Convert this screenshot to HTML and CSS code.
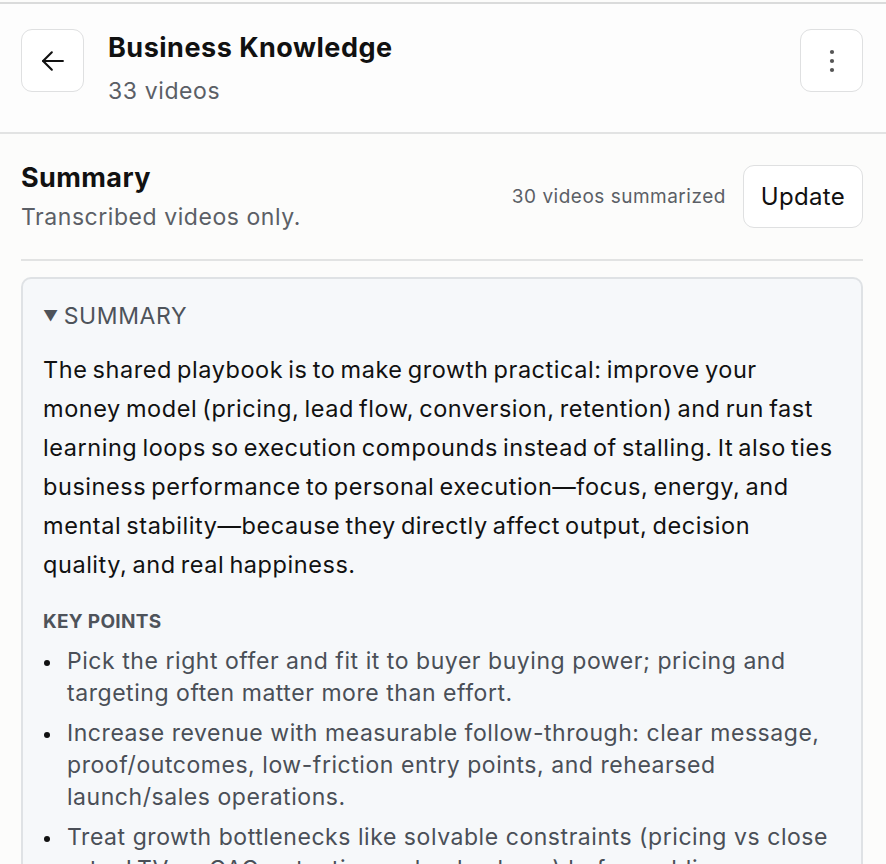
FILE: index.html
```html
<!DOCTYPE html>
<html lang="en">
<head>
    <meta charset="UTF-8">
    <meta name="viewport" content="width=device-width, initial-scale=1.0">
    <title>Business Knowledge</title>
    <link rel="stylesheet" href="styles.css">
</head>
<body>
    <div class="top-bar">
        <button class="icon-btn" aria-label="Back">
            <svg width="28" height="28" viewBox="0 0 24 24" fill="none" stroke="#111" stroke-width="1.8" stroke-linecap="round" stroke-linejoin="round">
                <path d="M20.5 12H3.5"/>
                <path d="M11 4.5L3.5 12l7.5 7.5"/>
            </svg>
        </button>
        <div class="title-block">
            <h1>Business Knowledge</h1>
            <div class="count">33 videos</div>
        </div>
        <button class="icon-btn" aria-label="More">
            <svg width="24" height="24" viewBox="0 0 24 24" fill="#555">
                <circle cx="12" cy="3" r="2.1"/>
                <circle cx="12" cy="12" r="2.1"/>
                <circle cx="12" cy="21" r="2.1"/>
            </svg>
        </button>
    </div>

    <div class="content">
        <div class="summary-head">
            <div>
                <h2>Summary</h2>
                <div class="sub">Transcribed videos only.</div>
            </div>
            <div class="actions">
                <span class="status">30 videos summarized</span>
                <button class="update-btn">Update</button>
            </div>
        </div>

        <details class="card" open>
            <summary>SUMMARY</summary>
            <p class="overview">The shared playbook is to make growth practical: improve your money model (pricing, lead flow, conversion, retention) and run fast learning loops so execution compounds instead of stalling. It also ties business performance to personal execution—focus, energy, and mental stability—because they directly affect output, decision quality, and real happiness.</p>

            <h3>KEY POINTS</h3>
            <ul class="points">
                <li>Pick the right offer and fit it to buyer buying power; pricing and targeting often matter more than effort.</li>
                <li>Increase revenue with measurable follow-through: clear message, proof/outcomes, low-friction entry points, and rehearsed launch/sales operations.</li>
                <li>Treat growth bottlenecks like solvable constraints (pricing vs close rate, LTV vs CAC, retention vs lead volume) before adding more.</li>
            </ul>
        </details>
    </div>
</body>
</html>
```

FILE: styles.css
```css
* {
    box-sizing: border-box;
}
body {
    margin: 0;
    padding-top: 2px;
    background-color: #fcfcfb;
    font-family: Inter, "Noto Sans", sans-serif;
    color: #111;
    overflow: hidden;
}
.top-bar {
    display: flex;
    align-items: flex-start;
    gap: 24px;
    padding: 25px 23px 27px 21px;
    border-top: 2px solid #dadbdb;
    border-bottom: 2px solid #e2e3e3;
    background-color: #fdfdfd;
}
.icon-btn {
    width: 63px;
    height: 63px;
    flex-shrink: 0;
    display: flex;
    align-items: center;
    justify-content: center;
    background-color: #fff;
    border: 1.5px solid #dfe0e1;
    border-radius: 11px;
    padding: 0;
    cursor: pointer;
}
.title-block {
    flex: 1;
    margin-top: 2px;
}
.title-block h1 {
    margin: 0;
    font-size: 27px;
    font-weight: 700;
    line-height: 34px;
    letter-spacing: 0.5px;
}
.title-block .count {
    margin-top: 12px;
    font-size: 23px;
    line-height: 28px;
    letter-spacing: 0.6px;
    color: #5b5f66;
}
.content {
    padding: 0 23px 0 21px;
}
.summary-head {
    display: flex;
    justify-content: space-between;
    align-items: flex-start;
    padding: 27px 0 28px;
    border-bottom: 2px solid #e2e3e3;
    margin-bottom: 16px;
}
.summary-head h2 {
    margin: 0;
    font-size: 27px;
    font-weight: 700;
    line-height: 34px;
    letter-spacing: 0.4px;
}
.summary-head .sub {
    margin-top: 8px;
    font-size: 23px;
    line-height: 28px;
    letter-spacing: 0.55px;
    color: #5b5f66;
}
.actions {
    display: flex;
    align-items: center;
    gap: 17px;
    margin-top: 4px;
}
.status {
    font-size: 19px;
    letter-spacing: 0.5px;
    color: #5b5f66;
}
.update-btn {
    height: 63px;
    padding: 0 17px;
    font-family: inherit;
    font-size: 24px;
    letter-spacing: 0.3px;
    color: #111;
    background-color: #fff;
    border: 1.5px solid #dfe0e1;
    border-radius: 11px;
    cursor: pointer;
}
.card {
    background-color: #f6f8fa;
    border: 2px solid #dfe2e5;
    border-radius: 10px;
    padding: 23px 20px 40px 20px;
}
.card summary {
    list-style: none;
    font-size: 23px;
    line-height: 28px;
    letter-spacing: 0.6px;
    color: #4e535a;
    cursor: pointer;
}
.card summary::-webkit-details-marker {
    display: none;
}
.card summary::before {
    content: "\25BC";
    display: inline-block;
    font-size: 15px;
    margin-right: 5px;
    vertical-align: 3px;
}
.overview {
    margin: 20px 6px 26px 0;
    font-size: 23.5px;
    line-height: 39px;
    letter-spacing: 0.55px;
    word-spacing: -2px;
    color: #111;
}
.card h3 {
    margin: 0 0 11px;
    font-size: 19px;
    line-height: 24px;
    font-weight: 700;
    letter-spacing: 0.3px;
    color: #4e535a;
}
.points {
    margin: 0;
    padding: 0;
    list-style: none;
}
.points li {
    position: relative;
    padding-left: 24px;
    font-size: 23px;
    line-height: 32px;
    letter-spacing: 0.55px;
    color: #4a4f57;
    margin-bottom: 8px;
}
/* solid dot, sits a little below the line's middle */
.points li::before {
    content: "";
    position: absolute;
    left: 1px;
    top: 15px;
    width: 6px;
    height: 6px;
    border-radius: 50%;
    background-color: #111;
}
```
